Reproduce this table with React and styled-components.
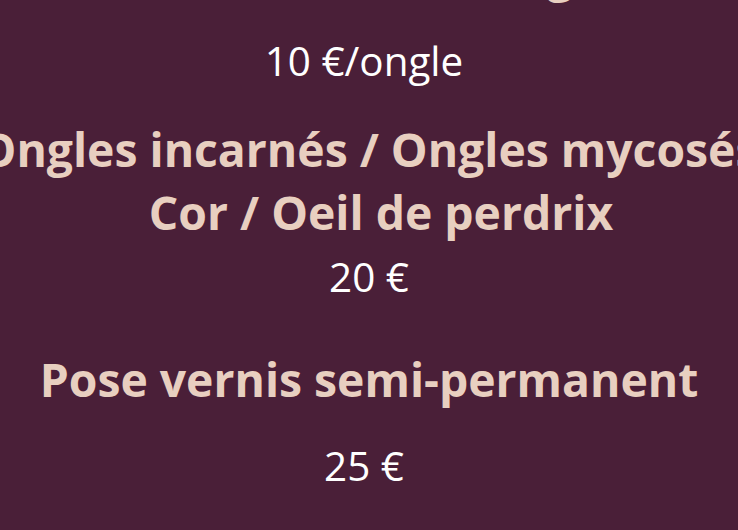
import React from 'react'
import styled, { createGlobalStyle } from "styled-components";

const GlobalStyle = createGlobalStyle`
  body {
    margin: 0;
    background: #4a1f38;
    overflow: hidden;
    font-family: "Open Sans", "Liberation Sans", sans-serif;
  }
`

const services = [
  { lines: [["Reconstruction ongle", 0]], price: "10 €/ongle", top: -57, gap: 27, trail: 10 },
  {
    lines: [["Ongles incarnés / Ongles mycosés", 0], ["Cor / Oeil de perdrix", 24]],
    price: "20 €",
    top: 29,
    gap: 5,
    trail: 0,
  },
  { lines: [["Pose vernis semi-permanent", 0]], price: "25 €", top: 43, gap: 27, trail: 10 },
];

function App() {
  return (
    <Page>
      <GlobalStyle />
      {services.map((s) => (
        <Service key={s.price} $top={s.top}>
          <Title>
            {s.lines.map(([text, shift]) => (
              <Line key={text} $shift={shift}>{text}</Line>
            ))}
          </Title>
          <Price $gap={s.gap} $trail={s.trail}>{s.price}</Price>
        </Service>
      ))}
    </Page>
  )
}

const Page = styled.main`
  display: flex;
  flex-direction: column;
  align-items: center;
  width: 100%;
  height: 530px;
  overflow: hidden;
`
const Service = styled.section`
  display: flex;
  flex-direction: column;
  align-items: center;
  margin-top: ${(p) => p.$top}px;
  flex-shrink: 0;
`
const Title = styled.h2`
  margin: 0;
  display: flex;
  flex-direction: column;
  align-items: center;
  font-size: 46.3px;
  line-height: 63px;
  font-weight: 700;
  color: #e8cfc0;
  text-align: center;
`
const Line = styled.span`
  white-space: nowrap;
  padding-left: ${(p) => p.$shift}px;
`
const Price = styled.p`
  margin: ${(p) => p.$gap}px 0 0;
  padding-right: ${(p) => p.$trail}px;
  font-size: 40.4px;
  line-height: 56px;
  font-weight: 400;
  color: #ffffff;
  text-align: center;
`

export default App
